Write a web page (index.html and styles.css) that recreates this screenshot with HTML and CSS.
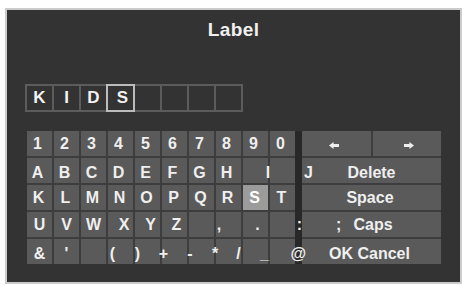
FILE: index.html
```html
<!DOCTYPE html>
<html lang="en">
<head>
<meta charset="utf-8">
<title>Label</title>
<link rel="stylesheet" href="styles.css">
</head>
<body>
<div class="panel">
  <h1 class="title">Label</h1>

  <div class="entry">
    <span class="cell">K</span>
    <span class="cell">I</span>
    <span class="cell">D</span>
    <span class="cell cell-active"><span class="s-nudge">S</span></span>
    <span class="cell"></span>
    <span class="cell"></span>
    <span class="cell"></span>
    <span class="cell"></span>
  </div>

  <div class="keyboard">
    <div class="keys">
      <div class="row row-digits">
        <div class="key"><span>1</span></div>
        <div class="key"><span>2</span></div>
        <div class="key"><span>3</span></div>
        <div class="key"><span>4</span></div>
        <div class="key"><span>5</span></div>
        <div class="key"><span>6</span></div>
        <div class="key"><span>7</span></div>
        <div class="key"><span>8</span></div>
        <div class="key"><span>9</span></div>
        <div class="key"><span>0</span></div>
      </div>
      <div class="row row-low row-ah">
        <div class="key"><span>A</span></div>
        <div class="key"><span>B</span></div>
        <div class="key"><span>C</span></div>
        <div class="key"><span>D</span></div>
        <div class="key"><span>E</span></div>
        <div class="key"><span>F</span></div>
        <div class="key"><span>G</span></div>
        <div class="key"><span>H</span></div>
        <div class="key"><span class="lbl-i">I</span></div>
        <div class="key"></div>
      </div>
      <div class="row row-kt">
        <div class="key"><span>K</span></div>
        <div class="key"><span>L</span></div>
        <div class="key"><span>M</span></div>
        <div class="key"><span>N</span></div>
        <div class="key"><span>O</span></div>
        <div class="key"><span>P</span></div>
        <div class="key"><span>Q</span></div>
        <div class="key"><span>R</span></div>
        <div class="key key-focus"><span>S</span></div>
        <div class="key"><span>T</span></div>
      </div>
      <div class="row row-uz">
        <div class="key"><span>U</span></div>
        <div class="key"><span>V</span></div>
        <div class="key"><span>W</span></div>
        <div class="key"><span class="lbl-x">X</span></div>
        <div class="key"><span class="lbl-y">Y</span></div>
        <div class="key"><span class="lbl-z">Z</span></div>
        <div class="key"></div>
        <div class="key"><span class="lbl-comma">,</span></div>
        <div class="key"><span class="lbl-dot">.</span></div>
        <div class="key"><span class="lbl-colon">:</span></div>
      </div>
      <div class="row row-low">
        <div class="key"><span>&amp;</span></div>
        <div class="key"><span>'</span></div>
        <div class="key"></div>
        <div class="key"><span class="lbl-lp">(</span></div>
        <div class="key"><span class="lbl-rp">)</span></div>
        <div class="key"><span class="lbl-plus">+</span></div>
        <div class="key"><span class="lbl-minus">-</span></div>
        <div class="key"><span class="lbl-star">*</span></div>
        <div class="key"><span class="lbl-slash">/</span></div>
        <div class="key key-pair"><span class="lbl-under">_</span><span class="lbl-at">@</span></div>
      </div>
    </div>

    <div class="divider"></div>

    <div class="actions">
      <div class="arow arow-split">
        <div class="key key-arrow"><svg class="arrow arrow-left" width="10" height="7" viewBox="0 0 10 7"><path d="M0 3.5 L4.6 0 V2 H10 V5 H4.6 V7 Z"/></svg></div>
        <div class="key key-arrow"><svg class="arrow arrow-right" width="10" height="7" viewBox="0 0 10 7"><path d="M10 3.5 L5.4 0 V2 H0 V5 H5.4 V7 Z"/></svg></div>
      </div>
      <div class="arow">
        <div class="key key-wide row-low"><span class="side side-start">J</span><span class="main">Delete</span><span class="side"></span></div>
      </div>
      <div class="arow">
        <div class="key key-wide"><span class="side"></span><span class="main main-space">Space</span><span class="side"></span></div>
      </div>
      <div class="arow">
        <div class="key key-wide"><span class="side side-end">;</span><span class="main main-caps">Caps</span><span class="side"></span></div>
      </div>
      <div class="arow">
        <div class="key key-wide row-low"><span class="side"></span><span class="main main-ok">OK Cancel</span><span class="side"></span></div>
      </div>
    </div>
  </div>
</div>
</body>
</html>
```

FILE: styles.css
```css
html, body {
  margin: 0;
  padding: 0;
  background: #ffffff;
  overflow: hidden;
}

body {
  font-family: "Liberation Sans", Arial, sans-serif;
  color: #efefef;
}

.panel {
  box-sizing: content-box;
  margin: 8px 0 0 5px;
  width: 453px;
  height: 272px;
  border: 2px solid #cbcbcb;
  background: #333333;
}

.title {
  margin: 9px 0 0;
  font-size: 19px;
  line-height: 22px;
  font-weight: bold;
  letter-spacing: 0.4px;
  text-align: center;
  color: #f0f0f0;
}

/* text entry boxes */
.entry {
  display: flex;
  gap: 2px;
  width: max-content;
  padding: 2px;
  margin: 43px 0 0 18px;
  background: #5c5c5c;
}

.cell {
  width: 25px;
  height: 24px;
  background: #333333;
  display: flex;
  align-items: center;
  justify-content: center;
  font-size: 17px;
  font-weight: bold;
  color: #f2f2f2;
}

.cell-active {
  box-shadow: 0 0 0 2px #bcbcbc;
}

.s-nudge {
  margin-left: 4px;
}

/* keyboard */
.keyboard {
  display: flex;
  margin: 19px 0 0 20px;
}

.keys {
  position: relative;
  z-index: 1;
  display: flex;
  flex-direction: column;
  gap: 2px;
  background: #3d3d3d;
}

.row {
  display: grid;
  grid-template-columns: repeat(10, 25px);
  gap: 2px;
  height: 25px;
}

.key {
  box-sizing: border-box;
  min-width: 0;
  background: #5a5a5a;
  display: flex;
  align-items: center;
  justify-content: center;
  font-size: 16px;
  line-height: 16px;
  font-weight: bold;
  color: #efefef;
  white-space: nowrap;
}

.row-low .key,
.key.row-low {
  padding-top: 5px;
}

.row-digits .key span,
.row-ah .key span {
  margin-right: 4px;
}

.row-kt .key span {
  margin-right: 2px;
}

.key-focus {
  background: #9b9b9b;
  color: #ffffff;
}

.row-ah .key .lbl-i { margin: 0 0 0 25px; }

.lbl-x { margin-left: 7px; }
.lbl-y { margin-left: 6px; }
.lbl-z { margin-left: 4px; }
.lbl-comma { margin-right: 19px; }
.lbl-dot { margin-left: 4px; }
.lbl-colon { margin-left: 34px; }

.lbl-lp { margin-right: 16px; }
.lbl-rp { margin-right: 20px; }
.lbl-plus { margin-right: 22px; }
.lbl-minus { margin-right: 23px; }
.lbl-star { margin-right: 27px; }
.lbl-slash { margin-right: 34px; }

.key-pair {
  justify-content: space-between;
}

.lbl-under { margin-left: -10px; }
.lbl-at { margin-right: -11px; }

.divider {
  width: 7px;
  background: #282828;
}

.actions {
  display: flex;
  flex-direction: column;
  gap: 2px;
  width: 139px;
  background: #3d3d3d;
}

.arow {
  display: grid;
  grid-template-columns: 1fr;
  height: 25px;
}

.arow-split {
  grid-template-columns: 1fr 1fr;
  gap: 2px;
}

.key-arrow {
  padding-top: 4px;
}

.arrow {
  display: block;
  fill: #eeeeee;
}

.arrow-left { margin-right: 4px; }
.arrow-right { margin-left: 4px; }

.key-wide {
  display: grid;
  grid-template-columns: 1fr auto 1fr;
  align-items: center;
}

.side-start {
  justify-self: start;
  margin-left: 2px;
}

.side-end {
  justify-self: end;
  margin-right: 9px;
}

.main-space { margin-right: 3px; }
.main-caps { margin-left: 3px; }
.main-ok { margin-right: 4px; }
```
